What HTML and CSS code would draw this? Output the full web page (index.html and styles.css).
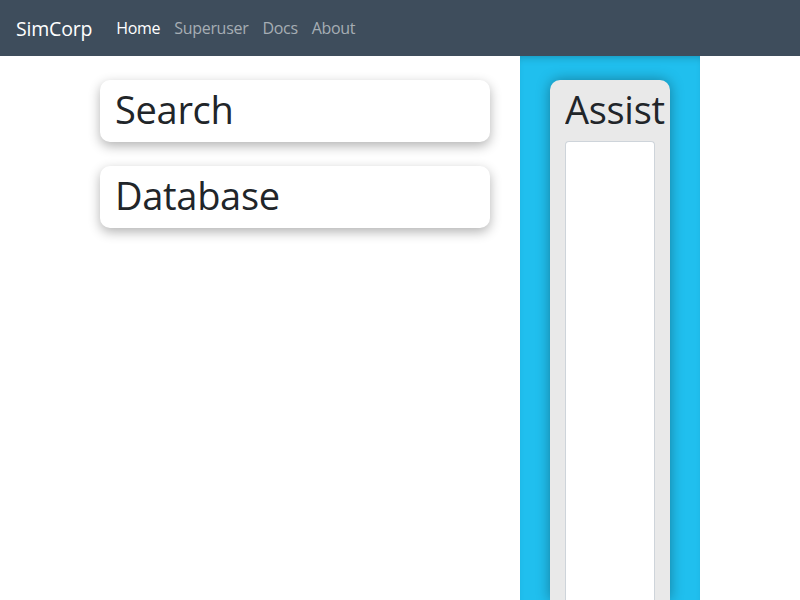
FILE: index.html
```html
<!DOCTYPE html>
<html>
<head>
<meta charset="utf-8">
<link rel="stylesheet" href="styles.css">
</head>
<body>
<nav class="navbar">
  <span class="brand">SimCorp</span>
  <a class="nav-link active">Home</a>
  <a class="nav-link">Superuser</a>
  <a class="nav-link">Docs</a>
  <a class="nav-link">About</a>
</nav>
<main class="layout">
  <section class="left">
    <div class="card"><h2 class="title">Search</h2></div>
    <div class="card"><h2 class="title">Database</h2></div>
  </section>
  <aside class="side">
    <div class="assist">
      <h2 class="title">Assist</h2>
      <div class="box"></div>
    </div>
  </aside>
</main>
</body>
</html>
```
FILE: styles.css
```css
* { box-sizing: border-box; }
html, body { margin: 0; height: 100%; }
body {
  font-family: "Open Sans", "Liberation Sans", sans-serif;
  color: #212529;
  background: #fff;
  overflow: hidden;
}
.navbar {
  height: 56px;
  background: #3e4d5c;
  display: flex;
  align-items: center;
  padding: 0 16px;
  position: relative;
  z-index: 2;
}
.brand {
  color: #fff;
  font-size: 19.5px;
  margin-right: 24px;
  letter-spacing: -0.2px;
}
.nav-link {
  color: #a6adb4;
  font-size: 16px;
  margin-right: 14px;
  letter-spacing: -0.3px;
}
.nav-link.active { color: #fff; }
.layout {
  display: flex;
  height: calc(100% - 56px);
  gap: 30px;
}
.left {
  width: 490px;
  padding: 24px 0 0 100px;
  display: flex;
  flex-direction: column;
  gap: 24px;
}
.card {
  background: #fff;
  border-radius: 10px;
  height: 62px;
  padding: 5px 15px;
  box-shadow: 0 4px 12px rgba(0,0,0,0.3);
}
.title {
  margin: 0;
  font-weight: 400;
  font-size: 38px;
  line-height: 48px;
  letter-spacing: -0.3px;
  white-space: nowrap;
}
.side {
  width: 180px;
  background: #20bfee;
  padding: 24px 30px 0;
  box-shadow: inset 0 6px 10px -6px rgba(0,0,0,0.3);
  display: flex;
}
.assist {
  width: 120px;
  background: #e9e9e9;
  border-radius: 10px 10px 0 0;
  padding: 5px 0 0 15px;
  overflow: hidden;
  box-shadow: 0 0 14px rgba(0,0,0,0.35);
  display: flex;
  flex-direction: column;
}
.assist .title { overflow: hidden; }
.box {
  margin: 8px 15px 0 0;
  flex: 1;
  background: #fff;
  border: 1px solid #ced4da;
  border-bottom: none;
  border-radius: 4px 4px 0 0;
}
```
